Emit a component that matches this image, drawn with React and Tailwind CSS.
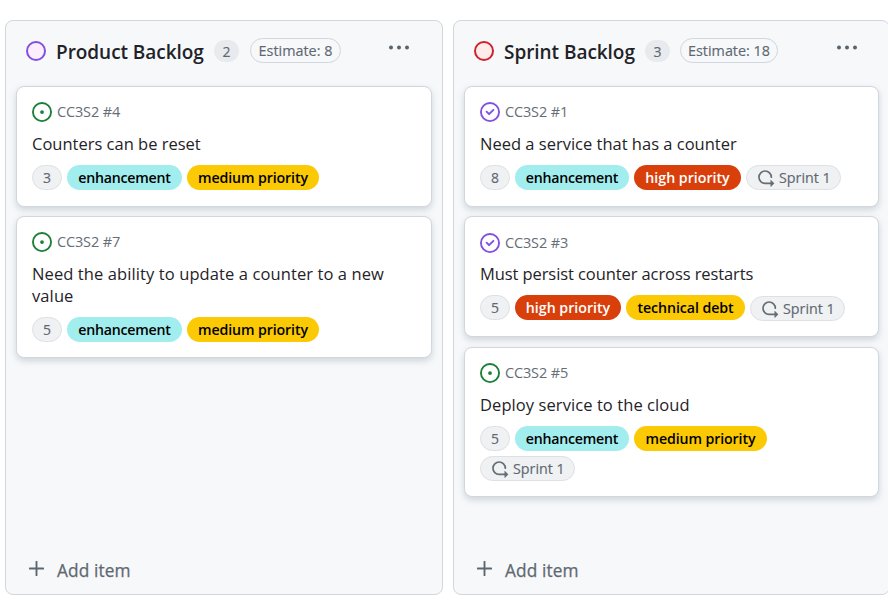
const LABELS = {
  enhancement: "bg-[#a2eeef] text-black tracking-[-0.24px]",
  "medium priority": "bg-[#fbca04] text-black tracking-[-0.12px]",
  "technical debt": "bg-[#fbca04] text-black tracking-[-0.08px]",
  "high priority": "bg-[#d93f0b] text-white tracking-[0px]",
};

const COLUMNS = [
  {
    name: "Product Backlog",
    nameClass: "w-[149px] tracking-[-0.05px]",
    circle: "border-[#8250df] bg-[#fbefff]",
    count: 2,
    estimate: "Estimate: 8",
    estimateClass: "ml-[11px] w-[91px]",
    menuClass: "mr-[22px]",
    width: "w-[438px]",
    cards: [
      {
        id: "#4", open: true, title: "Counters can be reset", points: 3,
        className: "h-[121px] pt-[15px]", titleClass: "mt-[11px] tracking-[0px]",
        labels: [["enhancement", "w-[115px]"], ["medium priority", "w-[132px]"]],
      },
      {
        id: "#7", open: true, title: "Need the ability to update a counter to a new value", points: 5,
        className: "h-[142px] pt-[15px]", titleClass: "mt-[11px] w-[375px] tracking-[0.1px]",
        labels: [["enhancement", "w-[115px]"], ["medium priority", "w-[132px]"]],
      },
    ],
  },
  {
    name: "Sprint Backlog",
    nameClass: "w-[132px] tracking-[-0.05px]",
    circle: "border-[#cf222e] bg-[#ffebe9]",
    count: 3,
    estimate: "Estimate: 18",
    estimateClass: "ml-[10px] w-[98px]",
    menuClass: "mr-[21px]",
    width: "w-[437px]",
    cards: [
      {
        id: "#1", open: false, title: "Need a service that has a counter", points: 8,
        className: "h-[121px] pt-[15px]", titleClass: "mt-[11px] tracking-[0px]", sprint: "",
        labels: [["enhancement", "w-[114px]"], ["high priority", "w-[107px]"]],
      },
      {
        id: "#3", open: false, title: "Must persist counter across restarts", points: 5,
        className: "mb-px h-[121px] pt-[16px]", titleClass: "mt-[10px] tracking-[-0.09px]", sprint: "mt-px -mb-px",
        labels: [["high priority", "w-[106px]"], ["technical debt", "w-[119px]"]],
      },
      {
        id: "#5", open: true, title: "Deploy service to the cloud", points: 5,
        className: "h-[150px] pt-[15px]", titleClass: "mt-[11px] tracking-[0.08px]", sprint: "",
        labels: [["enhancement", "w-[114px]"], ["medium priority", "w-[133px]"]],
      },
    ],
  },
];

function StatusIcon({ open }) {
  return open ? (
    <svg className="size-5 shrink-0 fill-[#1a7f37]" viewBox="0 0 16 16">
      <path d="M8 9.5a1.5 1.5 0 1 0 0-3 1.5 1.5 0 0 0 0 3Z" />
      <path d="M8 0a8 8 0 1 1 0 16A8 8 0 0 1 8 0ZM1.5 8a6.5 6.5 0 1 0 13 0 6.5 6.5 0 0 0-13 0Z" />
    </svg>
  ) : (
    <svg className="size-5 shrink-0 fill-[#8250df]" viewBox="0 0 16 16">
      <path d="M11.28 6.78a.75.75 0 0 0-1.06-1.06L7.25 8.69 5.78 7.22a.75.75 0 0 0-1.06 1.06l2 2a.75.75 0 0 0 1.06 0l3.5-3.5Z" />
      <path d="M16 8A8 8 0 1 1 0 8a8 8 0 0 1 16 0Zm-1.5 0a6.5 6.5 0 1 0-13 0 6.5 6.5 0 0 0 13 0Z" />
    </svg>
  );
}

function IterationIcon() {
  return (
    <svg className="size-[18px] shrink-0 fill-[#656d76]" viewBox="0 0 16 16">
      <path d="M2.5 7.25a4.75 4.75 0 0 1 9.5 0 .75.75 0 0 0 1.5 0 6.25 6.25 0 1 0-6.25 6.25H12v2.146c0 .223.27.335.427.177l2.896-2.896a.25.25 0 0 0 0-.354l-2.896-2.896a.25.25 0 0 0-.427.177V12H7.25A4.75 4.75 0 0 1 2.5 7.25Z" />
    </svg>
  );
}

function Card({ card }) {
  return (
    <article className={`flex flex-col rounded-lg border border-[#d0d7de] bg-white pl-[15px] pr-3 shadow-[0_3px_6px_rgba(140,149,159,0.35)] ${card.className}`}>
      <div className="flex h-5 items-center gap-[5px]">
        <StatusIcon open={card.open} />
        <span className="-mt-px text-[14.5px] leading-5 tracking-[-0.15px] text-[#656d76]">CC3S2 {card.id}</span>
      </div>
      <h3 className={`text-[16.5px] leading-[22px] text-[#1f2328] ${card.titleClass}`}>{card.title}</h3>
      <div className="mt-[10px] flex flex-wrap gap-[5px]">
        <span className="flex h-[25px] w-[30px] items-center justify-center rounded-full border border-[#dde1e5] bg-[#eff1f3] text-[14px] text-[#5f6872] [-webkit-text-stroke:0.15px]">{card.points}</span>
        {card.labels.map(([label, width]) => (
          <span key={label} className={`flex h-[25px] items-center justify-center whitespace-nowrap rounded-full text-[14.2px] font-semibold ${LABELS[label]} ${width}`}>
            {label}
          </span>
        ))}
        {card.sprint !== undefined && (
          <span className={`flex h-[25px] w-[95px] items-center gap-[4px] whitespace-nowrap rounded-full border border-[#dde1e5] bg-[#eff1f3] pl-[10px] text-[14.3px] tracking-[0px] text-[#5f6872] [-webkit-text-stroke:0.15px] ${card.sprint}`}>
            <IterationIcon />
            <span className="pt-px">Sprint 1</span>
          </span>
        )}
      </div>
    </article>
  );
}

function Column({ column }) {
  return (
    <section className={`flex h-[575px] shrink-0 flex-col rounded-lg border border-[#d0d7de] bg-[#f6f8fa] px-[10px] ${column.width}`}>
      <header className="flex h-[65px] items-start pl-[10px] pt-[17px]">
        <span className={`mt-[3px] size-5 shrink-0 rounded-full border-2 ${column.circle}`} />
        <h2 className={`ml-[10px] mt-px shrink-0 whitespace-nowrap text-[19px] font-semibold leading-[27px] text-[#1f2328] ${column.nameClass}`}>{column.name}</h2>
        <span className="ml-[9px] mt-[2px] flex h-[22px] w-[25px] items-center justify-center rounded-full bg-[#e8eaed] text-[14px] text-[#5f6872] [-webkit-text-stroke:0.15px]">{column.count}</span>
        <span className={`flex h-[25px] items-center justify-center whitespace-nowrap rounded-full border border-[#d0d7de] text-[14.4px] tracking-[0px] text-[#5f6872] [-webkit-text-stroke:0.15px] ${column.estimateClass}`}>{column.estimate}</span>
        <svg className={`ml-auto mt-[-1px] size-[22px] fill-[#59636e] ${column.menuClass}`} viewBox="0 0 22 22">
          <circle cx="3" cy="10.5" r="2" />
          <circle cx="11" cy="10.5" r="2" />
          <circle cx="19" cy="10.5" r="2" />
        </svg>
      </header>
      <div className="flex flex-col gap-[9px]">
        {column.cards.map((card) => (
          <Card key={card.id} card={card} />
        ))}
      </div>
      <button className="mt-auto mb-[10px] flex h-[27px] items-center pl-[13px] text-[#5f6872]">
        <svg className="mb-1 size-[15px] fill-none stroke-current stroke-[1.9]" viewBox="0 0 15 15">
          <path d="M7.5 .7v13.6M.7 7.5h13.6" strokeLinecap="round" />
        </svg>
        <span className="ml-[13px] text-[17.3px] tracking-[0.1px] [-webkit-text-stroke:0.25px]">Add item</span>
      </button>
    </section>
  );
}

export default function App() {
  return (
    <main className="flex h-[604px] w-[888px] gap-[10px] overflow-hidden bg-white pl-[5px] pt-5 font-['Open_Sans','Noto_Sans',sans-serif]">
      {COLUMNS.map((column) => (
        <Column key={column.name} column={column} />
      ))}
    </main>
  );
}
